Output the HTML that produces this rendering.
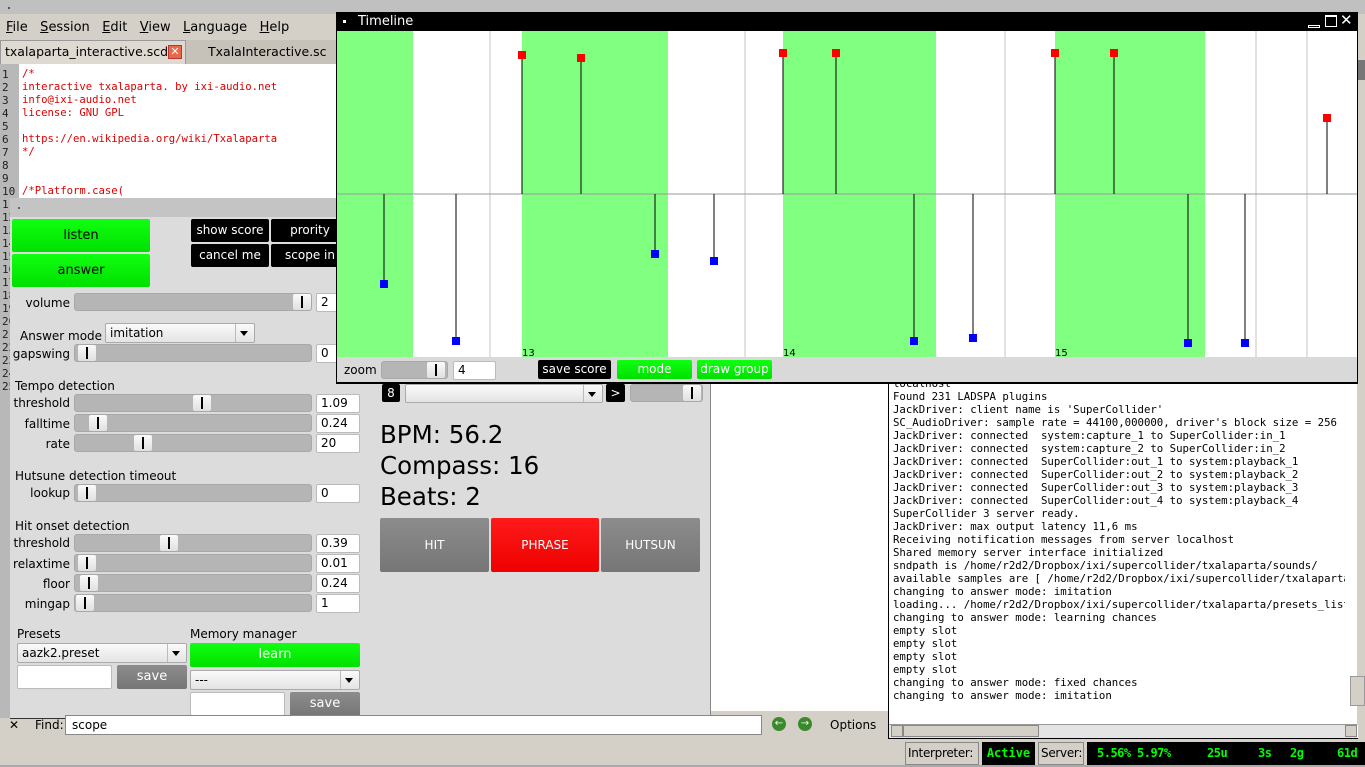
<!DOCTYPE html>
<html><head><meta charset="utf-8"><style>
*{box-sizing:border-box;margin:0;padding:0}
body{width:1365px;height:767px;overflow:hidden;background:#d4d0c8;position:relative;font-family:"DejaVu Sans","Liberation Sans",sans-serif;font-size:12px;color:#000}
.a{position:absolute}
.mono{font-family:"DejaVu Sans Mono","Liberation Mono",monospace}
.lbl{position:absolute;font-size:12px;white-space:nowrap;line-height:16px}
.r{text-align:right}
.sl{position:absolute;height:18px;background:#b5b5b5;border:1px solid #a8a8a8;border-radius:3px}
.sl i{position:absolute;top:0;width:18px;height:16px;background:linear-gradient(#fafafa,#e0e0e0);border-radius:2px}
.sl i:after{content:"";position:absolute;left:8px;top:2px;width:2px;height:12px;background:#000}
.box{position:absolute;height:19px;background:#fff;border:1px solid #bbb;border-radius:2px;padding-left:4px;line-height:17px;font-size:12px}
.btn{position:absolute;text-align:center;font-size:12px;border-radius:2px}
.blk{background:#000;color:#fff}
.grn{background:linear-gradient(#10ff10,#00e000);color:#000}
.gry{background:linear-gradient(#8c8c8c,#767676);color:#fff}
.cmb{position:absolute;height:20px;background:linear-gradient(#fafafa,#e4e4e4);border:1px solid #aaa;border-radius:2px;padding-left:4px;line-height:18px;font-size:12px}
.cmb:after{content:"";position:absolute;right:6px;top:7px;border:4px solid transparent;border-top:5px solid #000}
.cmb b{position:absolute;right:18px;top:0;bottom:0;width:1px;background:#bbb}
.st{position:absolute;top:0;line-height:23px}
</style></head><body>
<div class="a" style="left:0;top:0;width:1365px;height:14px;background:#c0c0c0"></div>
<div class="a" style="left:8px;top:7px;width:2px;height:2px;background:#555"></div>
<div class="a" style="left:0;top:14px;width:1365px;height:26px;background:#d4d0c8"></div>
<div class="lbl" style="left:6px;top:20px;font-size:13px"><u>F</u>ile&nbsp;&nbsp;&nbsp;<u>S</u>ession&nbsp;&nbsp;&nbsp;<u>E</u>dit&nbsp;&nbsp;&nbsp;<u>V</u>iew&nbsp;&nbsp;&nbsp;<u>L</u>anguage&nbsp;&nbsp;&nbsp;<u>H</u>elp</div>
<div class="a" style="left:0;top:40px;width:1365px;height:24px;background:#c6c2ba"></div>
<div class="a" style="left:0;top:40px;width:186px;height:24px;background:#dedad2;border:1px solid #999;border-bottom:none"></div>
<div class="lbl" style="left:5px;top:44px;font-size:12.5px">txalaparta_interactive.scd</div>
<div class="a" style="left:168px;top:45px;width:14px;height:14px;background:#e8684a;border:1px solid #b33;color:#fff;font-size:11px;line-height:12px;text-align:center">✕</div>
<div class="lbl" style="left:208px;top:44px;font-size:12.5px">TxalaInteractive.sc</div>
<div class="a" style="left:0;top:64px;width:337px;height:134px;background:#fff"></div>
<div class="a" style="left:0;top:64px;width:19px;height:654px;background:#b8b8b8"></div>
<div class="a mono" style="left:2px;top:68px;font-size:11px;line-height:13px;color:#222">1<br>2<br>3<br>4<br>5<br>6<br>7<br>8<br>9<br>10<br>11<br>12<br>13<br>14<br>15<br>16<br>17<br>18<br>19<br>20<br>21<br>22<br>23<br>24<br>25</div>
<div class="a mono" style="left:22px;top:68px;font-size:10.6px;line-height:13px;color:#d00;white-space:pre">/*
interactive txalaparta. by ixi-audio.net
info@ixi-audio.net
license: GNU GPL

https://en.wikipedia.org/wiki/Txalaparta
*/


/*Platform.case(</div>
<div class="a" style="left:10px;top:198px;width:701px;height:521px;background:#dcdcdc;border-right:1px solid #888;border-bottom:1px solid #333"></div>
<div class="a" style="left:10px;top:198px;width:701px;height:19px;background:#c4c4c4"></div>
<div class="a" style="left:18px;top:207px;width:2px;height:2px;background:#666"></div>
<div class="btn grn" style="left:12px;top:219px;width:138px;height:33px;line-height:33px;font-size:13px">listen</div>
<div class="btn grn" style="left:12px;top:254px;width:138px;height:33px;line-height:33px;font-size:13px">answer</div>
<div class="btn blk" style="left:191px;top:219px;width:78px;height:23px;line-height:23px">show score</div>
<div class="btn blk" style="left:271px;top:219px;width:78px;height:23px;line-height:23px">prority</div>
<div class="btn blk" style="left:191px;top:244px;width:78px;height:23px;line-height:23px">cancel me</div>
<div class="btn blk" style="left:271px;top:244px;width:78px;height:23px;line-height:23px">scope in</div>

<div class="lbl r" style="left:0;width:70px;top:295px">volume</div>
<div class="sl" style="left:74px;top:293px;width:238px"><i style="left:218px"></i></div>
<div class="box" style="left:316px;top:293px;width:44px">2</div>
<div class="lbl" style="left:20px;top:328px">Answer mode</div>
<div class="cmb" style="left:105px;top:323px;width:150px">imitation<b></b></div>
<div class="lbl r" style="left:0;width:70px;top:346px">gapswing</div>
<div class="sl" style="left:74px;top:344px;width:238px"><i style="left:3px"></i></div>
<div class="box" style="left:316px;top:344px;width:44px">0</div>

<div class="lbl" style="left:15px;top:378px">Tempo detection</div>
<div class="lbl r" style="left:0;width:70px;top:395px">threshold</div>
<div class="sl" style="left:74px;top:394px;width:238px"><i style="left:118px"></i></div>
<div class="box" style="left:316px;top:394px;width:44px">1.09</div>
<div class="lbl r" style="left:0;width:70px;top:416px">falltime</div>
<div class="sl" style="left:74px;top:414px;width:238px"><i style="left:14px"></i></div>
<div class="box" style="left:316px;top:414px;width:44px">0.24</div>
<div class="lbl r" style="left:0;width:70px;top:436px">rate</div>
<div class="sl" style="left:74px;top:434px;width:238px"><i style="left:59px"></i></div>
<div class="box" style="left:316px;top:434px;width:44px">20</div>

<div class="lbl" style="left:15px;top:468px">Hutsune detection timeout</div>
<div class="lbl r" style="left:0;width:70px;top:485px">lookup</div>
<div class="sl" style="left:74px;top:484px;width:238px"><i style="left:3px"></i></div>
<div class="box" style="left:316px;top:484px;width:44px">0</div>

<div class="lbl" style="left:15px;top:518px">Hit onset detection</div>
<div class="lbl r" style="left:0;width:70px;top:535px">threshold</div>
<div class="sl" style="left:74px;top:534px;width:238px"><i style="left:85px"></i></div>
<div class="box" style="left:316px;top:534px;width:44px">0.39</div>
<div class="lbl r" style="left:0;width:70px;top:556px">relaxtime</div>
<div class="sl" style="left:74px;top:554px;width:238px"><i style="left:3px"></i></div>
<div class="box" style="left:316px;top:554px;width:44px">0.01</div>
<div class="lbl r" style="left:0;width:70px;top:576px">floor</div>
<div class="sl" style="left:74px;top:574px;width:238px"><i style="left:5px"></i></div>
<div class="box" style="left:316px;top:574px;width:44px">0.24</div>
<div class="lbl r" style="left:0;width:70px;top:596px">mingap</div>
<div class="sl" style="left:74px;top:594px;width:238px"><i style="left:1px"></i></div>
<div class="box" style="left:316px;top:594px;width:44px">1</div>

<div class="lbl" style="left:17px;top:626px">Presets</div>
<div class="lbl" style="left:190px;top:626px">Memory manager</div>
<div class="cmb" style="left:17px;top:643px;width:170px">aazk2.preset<b></b></div>
<div class="btn grn" style="left:190px;top:643px;width:170px;height:24px;line-height:24px;color:#fff;font-size:13px">learn</div>
<div class="box" style="left:17px;top:665px;width:95px;height:24px"></div>
<div class="btn gry" style="left:117px;top:665px;width:70px;height:24px;line-height:24px;font-size:13px">save</div>
<div class="cmb" style="left:190px;top:670px;width:170px">---<b></b></div>
<div class="box" style="left:190px;top:692px;width:95px;height:24px"></div>
<div class="btn gry" style="left:290px;top:692px;width:70px;height:24px;line-height:24px;font-size:13px">save</div>

<div class="btn blk" style="left:382px;top:384px;width:18px;height:18px;line-height:18px">8</div>
<div class="cmb" style="left:405px;top:384px;width:198px;height:19px"><b></b></div>
<div class="btn blk" style="left:606px;top:384px;width:19px;height:18px;line-height:18px">&gt;</div>
<div class="sl" style="left:630px;top:384px;width:73px"><i style="left:52px"></i></div>
<div class="lbl" style="left:380px;top:419px;font-size:24.5px;line-height:31px">BPM: 56.2<br>Compass: 16<br>Beats: 2</div>
<div class="btn gry" style="left:380px;top:518px;width:109px;height:54px;line-height:54px">HIT</div>
<div class="btn" style="left:491px;top:518px;width:108px;height:54px;line-height:54px;background:linear-gradient(#ff1a1a,#ee0000);color:#fff">PHRASE</div>
<div class="btn gry" style="left:601px;top:518px;width:99px;height:54px;line-height:54px">HUTSUN</div>

<div class="a" style="left:711px;top:383px;width:177px;height:328px;background:#fff"></div>
<div class="a" style="left:888px;top:383px;width:470px;height:356px;background:#fff;border-left:1px solid #000;border-bottom:1px solid #000"></div>
<div class="a mono" style="left:893px;top:377px;font-size:10.7px;line-height:13px;white-space:pre;width:452px;overflow:hidden;height:336px">localhost
Found 231 LADSPA plugins
JackDriver: client name is 'SuperCollider'
SC_AudioDriver: sample rate = 44100,000000, driver's block size = 256
JackDriver: connected  system:capture_1 to SuperCollider:in_1
JackDriver: connected  system:capture_2 to SuperCollider:in_2
JackDriver: connected  SuperCollider:out_1 to system:playback_1
JackDriver: connected  SuperCollider:out_2 to system:playback_2
JackDriver: connected  SuperCollider:out_3 to system:playback_3
JackDriver: connected  SuperCollider:out_4 to system:playback_4
SuperCollider 3 server ready.
JackDriver: max output latency 11,6 ms
Receiving notification messages from server localhost
Shared memory server interface initialized
sndpath is /home/r2d2/Dropbox/ixi/supercollider/txalaparta/sounds/
available samples are [ /home/r2d2/Dropbox/ixi/supercollider/txalaparta
changing to answer mode: imitation
loading... /home/r2d2/Dropbox/ixi/supercollider/txalaparta/presets_list
changing to answer mode: learning chances
empty slot
empty slot
empty slot
empty slot
changing to answer mode: fixed chances
changing to answer mode: imitation</div>
<div class="a" style="left:889px;top:724px;width:468px;height:14px;background:#e4e4e4;border-top:1px solid #999"></div>
<div class="a" style="left:891px;top:725px;width:12px;height:12px;background:#d4d0c8;border:1px solid #888"></div>
<div class="a" style="left:903px;top:725px;width:136px;height:12px;background:#d4d0c8;border:1px solid #888"></div>
<div class="a" style="left:1345px;top:725px;width:12px;height:12px;background:#d4d0c8;border:1px solid #888"></div>
<div class="a" style="left:1357px;top:40px;width:8px;height:685px;background:#d4d0c8"></div>
<div class="a" style="left:1357px;top:60px;width:8px;height:20px;background:#777"></div>
<div class="a" style="left:1350px;top:676px;width:15px;height:30px;background:#d4d0c8;border:1px solid #999"></div>

<div class="lbl" style="left:9px;top:717px">✕</div>
<div class="lbl" style="left:35px;top:717px">Find:</div>
<div class="a" style="left:65px;top:715px;width:697px;height:20px;background:#fff;border:1px solid #888;padding-left:6px;line-height:18px">scope</div>
<div class="a" style="left:772px;top:717px;width:14px;height:14px;border-radius:50%;background:#3a8a2a;color:#fff;font-size:10px;line-height:14px;text-align:center">&#8592;</div>
<div class="a" style="left:798px;top:717px;width:14px;height:14px;border-radius:50%;background:#3a8a2a;color:#fff;font-size:10px;line-height:14px;text-align:center">&#8594;</div>
<div class="lbl" style="left:830px;top:717px">Options</div>
<div class="a" style="left:0;top:765px;width:1365px;height:2px;background:#aaa"></div>
<div class="a" style="left:905px;top:742px;width:74px;height:23px;border:1px solid #888;line-height:21px;padding-left:2px;font-size:12px;letter-spacing:-0.3px">Interpreter:</div>
<div class="a mono" style="left:982px;top:742px;width:53px;height:23px;background:#000;color:#0f0;line-height:23px;text-align:center;font-weight:bold;font-size:12px">Active</div>
<div class="a" style="left:1038px;top:742px;width:46px;height:23px;border:1px solid #888;line-height:21px;padding-left:2px;font-size:12px;letter-spacing:-0.3px">Server:</div>
<div class="a mono" style="left:1087px;top:742px;width:278px;height:23px;background:#000;color:#0f0;font-weight:bold;font-size:12px;letter-spacing:-0.5px">
<span class="st" style="left:10px">5.56%</span><span class="st" style="left:50px">5.97%</span><span class="st" style="left:120px">25u</span><span class="st" style="left:171px">3s</span><span class="st" style="left:203px">2g</span><span class="st" style="left:250px">61d</span></div>

<div class="a" style="left:336px;top:12px;width:1022px;height:372px;background:#d9d9d9;border:1px solid #000;border-bottom:2px solid #000"></div>
<div class="a" style="left:337px;top:12px;width:1020px;height:19px;background:#000"></div>
<div class="a" style="left:343px;top:20px;width:3px;height:3px;background:#fff"></div>
<div class="lbl" style="left:358px;top:14px;color:#fff;font-size:13px">Timeline</div>
<div class="a" style="left:1308px;top:25px;width:12px;height:3px;border:1px solid #fff"></div>
<div class="a" style="left:1325px;top:15px;width:12px;height:12px;border:1px solid #fff;border-top-width:2px"></div>
<div class="lbl" style="left:1340px;top:12px;color:#fff;font-size:15px">✕</div>
<svg class="a" style="left:337px;top:31px" width="1020" height="326" viewBox="337 31 1020 326">
<rect x="337" y="31" width="1020" height="326" fill="#fff"/>
<g stroke="#e2e2e2" stroke-width="2">
<line x1="490" y1="31" x2="490" y2="357"/><line x1="745" y1="31" x2="745" y2="357"/><line x1="1005" y1="31" x2="1005" y2="357"/><line x1="1256" y1="31" x2="1256" y2="357"/><line x1="1307" y1="31" x2="1307" y2="357"/>
</g>
<g fill="#80ff80">
<rect x="337" y="31" width="76" height="326"/><rect x="522" y="31" width="146" height="326"/><rect x="783" y="31" width="153" height="326"/><rect x="1055" y="31" width="150" height="326"/>
</g>
<line x1="337" y1="194" x2="1357" y2="194" stroke="#999" stroke-width="1"/>
<g stroke="#000" stroke-width="1">
<line x1="522" y1="55" x2="522" y2="194"/><line x1="581" y1="58" x2="581" y2="194"/><line x1="783" y1="53" x2="783" y2="194"/><line x1="836" y1="53" x2="836" y2="194"/><line x1="1055" y1="53" x2="1055" y2="194"/><line x1="1114" y1="53" x2="1114" y2="194"/><line x1="1327" y1="118" x2="1327" y2="194"/>
<line x1="384" y1="194" x2="384" y2="284"/><line x1="456" y1="194" x2="456" y2="341"/><line x1="655" y1="194" x2="655" y2="254"/><line x1="714" y1="194" x2="714" y2="261"/><line x1="914" y1="194" x2="914" y2="341"/><line x1="973" y1="194" x2="973" y2="338"/><line x1="1188" y1="194" x2="1188" y2="343"/><line x1="1245" y1="194" x2="1245" y2="343"/>
</g>
<g fill="#f00">
<rect x="518" y="51" width="8" height="8"/><rect x="577" y="54" width="8" height="8"/><rect x="779" y="49" width="8" height="8"/><rect x="832" y="49" width="8" height="8"/><rect x="1051" y="49" width="8" height="8"/><rect x="1110" y="49" width="8" height="8"/><rect x="1323" y="114" width="8" height="8"/>
</g>
<g fill="#00f">
<rect x="380" y="280" width="8" height="8"/><rect x="452" y="337" width="8" height="8"/><rect x="651" y="250" width="8" height="8"/><rect x="710" y="257" width="8" height="8"/><rect x="910" y="337" width="8" height="8"/><rect x="969" y="334" width="8" height="8"/><rect x="1184" y="339" width="8" height="8"/><rect x="1241" y="339" width="8" height="8"/>
</g>
<g font-family="DejaVu Sans,sans-serif" font-size="10" fill="#000">
<text x="522" y="356">13</text><text x="783" y="356">14</text><text x="1055" y="356">15</text>
</g>
</svg>
<div class="lbl" style="left:344px;top:362px">zoom</div>
<div class="sl" style="left:381px;top:361px;width:67px"><i style="left:45px"></i></div>
<div class="box" style="left:453px;top:361px;width:43px">4</div>
<div class="btn blk" style="left:538px;top:360px;width:73px;height:19px;line-height:19px">save score</div>
<div class="btn grn" style="left:617px;top:360px;width:75px;height:19px;line-height:19px;color:#fff">mode</div>
<div class="btn grn" style="left:697px;top:360px;width:75px;height:19px;line-height:19px;color:#fff">draw group</div>
</body></html>
